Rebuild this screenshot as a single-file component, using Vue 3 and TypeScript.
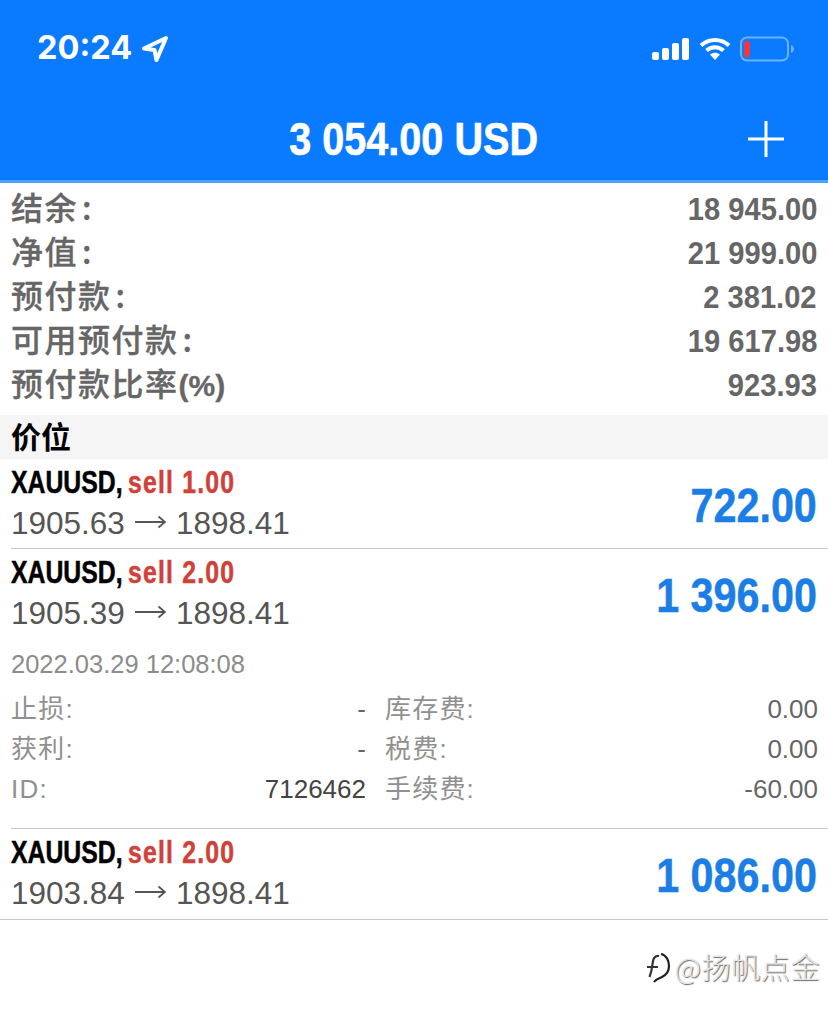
<script setup lang="ts">
interface SummaryRow {
  label: string
  mark: string
  value: string
}

interface DetailCell {
  label: string
  value: string
  dark?: boolean
}

interface Position {
  volume: string
  openPrice: string
  closePrice: string
  profit: string
  open?: boolean
}

const summary: SummaryRow[] = [
  { label: '结余', mark: ':', value: '18 945.00' },
  { label: '净值', mark: ':', value: '21 999.00' },
  { label: '预付款', mark: ':', value: '2 381.02' },
  { label: '可用预付款', mark: ':', value: '19 617.98' },
  { label: '预付款比率', mark: '(%)', value: '923.93' },
]

const positions: Position[] = [
  { volume: 'sell 1.00', openPrice: '1905.63', closePrice: '1898.41', profit: '722.00' },
  { volume: 'sell 2.00', openPrice: '1905.39', closePrice: '1898.41', profit: '1 396.00', open: true },
  { volume: 'sell 2.00', openPrice: '1903.84', closePrice: '1898.41', profit: '1 086.00' },
]

const details: DetailCell[] = [
  { label: '止损:', value: '-' },
  { label: '库存费:', value: '0.00' },
  { label: '获利:', value: '-' },
  { label: '税费:', value: '0.00' },
  { label: 'ID:', value: '7126462', dark: true },
  { label: '手续费:', value: '-60.00' },
]
</script>

<template>
  <div class="screen">
    <header class="top">
      <div class="status">
        <div class="clock">
          <span class="time">20:24</span>
          <svg class="arrow" width="28" height="28" viewBox="0 0 28 28">
            <path d="M25 3 3 13.5l10.5 1.5 2 10z" fill="none" stroke="#fff" stroke-width="4" stroke-linejoin="round" />
          </svg>
        </div>
        <div class="indicators">
          <svg width="38" height="24" viewBox="0 0 38 24">
            <rect x="0" y="15" width="7" height="8" rx="2" fill="#fff" />
            <rect x="10" y="11" width="7" height="12" rx="2" fill="#fff" />
            <rect x="20" y="6" width="7" height="17" rx="2" fill="#fff" />
            <rect x="30" y="1" width="7" height="22" rx="2" fill="#fff" />
          </svg>
          <svg width="32" height="24" viewBox="0 0 32 24">
            <path d="M2 8.5C10 1 22 1 30 8.5" fill="none" stroke="#fff" stroke-width="4" />
            <path d="M7.5 13.5C12.500 9 19.500 9 24.500 13.500" fill="none" stroke="#fff" stroke-width="4" />
            <path d="M11 17.500C14 15 18 15 21 17.500L16 23z" fill="#fff" />
          </svg>
          <svg class="battery" width="54" height="26" viewBox="0 0 54 26">
            <rect x="1" y="1.500" width="47" height="23" rx="6" fill="none" stroke="#6db0ff" stroke-width="2" />
            <rect x="4" y="5" width="6" height="16" rx="2" fill="#f0383f" />
            <path d="M51 9c2 1 3 2.500 3 4s-1 3-3 4z" fill="#6db0ff" />
          </svg>
        </div>
      </div>
      <div class="title-row">
        <h1 class="title">3 054.00 USD</h1>
        <svg class="plus" width="36" height="36" viewBox="0 0 36 36">
          <path d="M18 0v36M0 18h36" stroke="#fff" stroke-width="3" />
        </svg>
      </div>
    </header>

    <section class="summary">
      <div v-for="row in summary" :key="row.label" class="summary-row">
        <span class="summary-label">
          {{ row.label }}<span :class="row.mark === ':' ? 'colon' : 'unit'">{{ row.mark }}</span>
        </span>
        <span class="summary-value">{{ row.value }}</span>
      </div>
    </section>

    <div class="section-head">价位</div>

    <section>
      <article v-for="(pos, i) in positions" :key="i" class="position">
        <div class="position-main">
          <div class="position-text">
            <div class="line-one">
              <span class="squeeze">
                <span class="symbol">XAUUSD,</span> <span class="volume">{{ pos.volume }}</span>
              </span>
            </div>
            <div class="prices">
              {{ pos.openPrice }}<svg class="price-arrow" width="31" height="14" viewBox="0 0 31 14">
                <path d="M0 7h30M23.500 1.500 30 7l-6.500 5.500" fill="none" stroke="#555" stroke-width="1.800" />
              </svg>{{ pos.closePrice }}
            </div>
          </div>
          <span class="profit">{{ pos.profit }}</span>
        </div>
        <div v-if="pos.open" class="details">
          <div class="opened">2022.03.29 12:08:08</div>
          <div class="detail-grid">
            <div v-for="cell in details" :key="cell.label" class="detail-cell">
              <span class="detail-label">{{ cell.label }}</span>
              <span :class="['detail-value', { dark: cell.dark }]">{{ cell.value }}</span>
            </div>
          </div>
        </div>
      </article>
    </section>

    <div class="watermark">
      <svg width="28" height="32" viewBox="0 0 28 32">
        <path d="M14 4C9 3 8 8 7.500 12 7 17 6 21 4.500 25M2 15h11" fill="none" stroke="#333" stroke-width="2.200" />
        <path d="M16 2c5 1 8 6 8 12 0 5-3 9-7 11-3 1.500-6 2-8 5" fill="none" stroke="#222" stroke-width="2.200" />
      </svg>
      <span class="mark-text">@扬帆点金</span>
    </div>
  </div>
</template>

<style scoped>
.screen {
  position: relative;
  width: 828px;
  height: 1014px;
  overflow: hidden;
  background: #fff;
  font-family: "Liberation Sans", "Noto Sans CJK SC", sans-serif;
}

.top {
  height: 183px;
  box-sizing: border-box;
  background: #0a7aff;
  border-bottom: 3px solid #4f9fff;
  color: #fff;
}

.status {
  display: flex;
  justify-content: space-between;
  align-items: center;
  height: 50px;
  padding: 24px 34px 0 37px;
}

.clock {
  display: flex;
  align-items: center;
  gap: 9px;
}

.time {
  font-size: 32.500px;
  line-height: 36px;
  margin-top: -2px;
  font-weight: 700;
  font-family: "Inter", "Liberation Sans", sans-serif;
}

.indicators {
  display: flex;
  align-items: center;
  gap: 9px;
}

.title-row {
  position: relative;
  display: flex;
  justify-content: center;
  padding-top: 37px;
}

.title {
  margin: 0;
  font-size: 47px;
  line-height: 56px;
  font-weight: 700;
  white-space: nowrap;
  transform: scaleX(0.843);
  -webkit-text-stroke: 0.6px #fff;
}

.plus {
  position: absolute;
  right: 44px;
  top: 47px;
}

.summary {
  padding: 4px 11px 8px 11px;
}

.summary-row {
  display: flex;
  justify-content: space-between;
  align-items: center;
  height: 44px;
  color: #666;
  font-weight: 700;
}

.summary-label {
  font-family: "Noto Sans CJK SC", sans-serif;
  font-size: 32px;
  line-height: 44px;
  font-weight: 500;
  letter-spacing: 1.500px;
  margin-top: -6px;
  -webkit-text-stroke: 0.3px #666;
}

.colon {
  margin-left: 4px;
}

.unit {
  font-family: "Liberation Sans", sans-serif;
  font-size: 30px;
  line-height: 0;
  font-weight: 700;
  letter-spacing: 0;
}

.summary-value {
  font-size: 32px;
  transform: scaleX(0.91);
  transform-origin: right center;
}

.section-head {
  display: flex;
  align-items: center;
  height: 44px;
  padding-left: 11px;
  padding-bottom: 4px;
  box-sizing: border-box;
  background: #f5f5f5;
  color: #000;
  font-family: "Noto Sans CJK SC", sans-serif;
  font-size: 30px;
  font-weight: 700;
}

.position {
  margin-left: 11px;
  border-bottom: 1px solid #c8c8c8;
}

.position:last-child {
  margin-left: 0;
  padding-left: 11px;
}

.position-main {
  display: flex;
  justify-content: space-between;
  align-items: center;
  height: 89px;
  padding-right: 11px;
}

.position:last-child .position-main {
  height: 90px;
}

.position-text {
  margin-top: -8px;
}

.line-one {
  height: 33px;
  padding-top: 7px;
  line-height: 33px;
  margin-top: -2px;
  font-size: 31px;
  font-weight: 700;
  white-space: nowrap;
}

.squeeze {
  display: inline-block;
  transform: scaleX(0.8);
  transform-origin: left center;
  -webkit-text-stroke: 0.5px;
}

.symbol {
  color: #000;
}

.volume {
  color: #d0413a;
  letter-spacing: 1.500px;
  margin-left: -2px;
}

.prices {
  height: 40px;
  box-sizing: border-box;
  padding-top: 5px;
  line-height: 39px;
  font-size: 31.500px;
  color: #555;
  white-space: nowrap;
}

.price-arrow {
  margin: 0 10px;
  vertical-align: 5px;
}

.profit {
  font-size: 48px;
  line-height: 56px;
  margin-top: 4px;
  font-weight: 700;
  color: #1a7ee6;
  transform: scaleX(0.86);
  transform-origin: right center;
  -webkit-text-stroke: 0.5px #1a7ee6;
}

.details {
  height: 190px;
  box-sizing: border-box;
  padding: 6px 10px 0 0;
}

.opened {
  height: 45px;
  line-height: 40px;
  font-size: 25.500px;
  color: #8c8c8c;
}

.detail-grid {
  display: grid;
  grid-template-columns: 355px 1fr;
  column-gap: 19px;
}

.detail-cell {
  display: flex;
  justify-content: space-between;
  align-items: baseline;
  height: 40px;
  line-height: 40px;
  font-size: 26px;
}

.detail-label {
  color: #909090;
  letter-spacing: 1.200px;
}

.detail-value {
  color: #666;
}

.detail-value.dark {
  color: #444;
}

.watermark {
  position: absolute;
  right: 8px;
  top: 952px;
  display: flex;
  align-items: flex-start;
  gap: 2px;
}

.mark-text {
  font-family: "Noto Sans CJK SC", sans-serif;
  font-size: 29px;
  line-height: 28px;
  letter-spacing: 0.600px;
  font-weight: 300;
  color: #e4e4e4;
  text-shadow: 1px 1px 1px #666;
}
</style>
